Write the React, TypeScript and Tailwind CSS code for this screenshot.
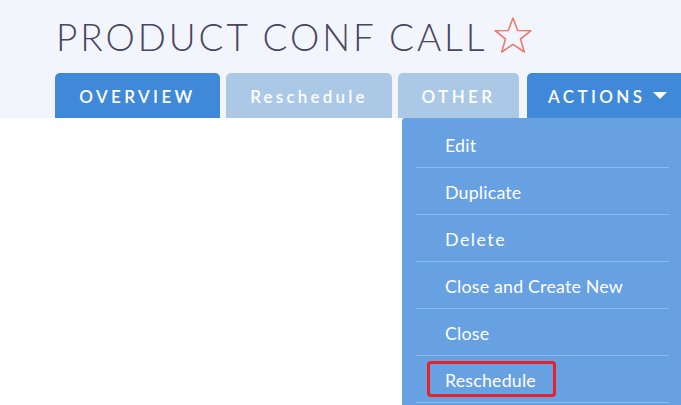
import React from "react";

const items = ["Edit", "Duplicate", "Delete", "Close and Create New", "Close", "Reschedule"];

export default function App() {
  return (
    <div className="relative w-[681px] h-[405px] overflow-hidden bg-white" style={{ fontFamily: "Lato, 'Open Sans', sans-serif" }}>
      <div className="h-[118px] bg-[#f2f6fc] pl-[55px] flex flex-col">
        <div className="flex items-center h-[73px] pl-[1px]">
          <h1 className="text-[37px] font-light tracking-[2.9px] text-[#4a4560] leading-none whitespace-nowrap">PRODUCT CONF CALL</h1>
          <svg width="40" height="38" viewBox="0 0 40 38" className="ml-[6px] -mt-[3px] shrink-0">
            <polygon points="20,2 24.7,14.5 38,14.7 27.5,23 31.3,36 20,28.3 8.7,36 12.5,23 2,14.7 15.3,14.5" fill="none" stroke="#ee7a70" strokeWidth="1.6" strokeLinejoin="round" />
          </svg>
        </div>
        <div className="flex items-end h-[45px]">
          <div className="shrink-0 w-[165px] h-[45px] rounded-t-[5px] bg-[#3f89d8] text-white flex items-center justify-center text-[17px] font-semibold tracking-[3.4px] pt-[2px]">OVERVIEW</div>
          <div className="shrink-0 ml-[6px] w-[166px] h-[45px] rounded-t-[5px] bg-[#abc9e6] text-white flex items-center justify-center text-[17px] font-semibold tracking-[3.2px] pt-[2px]">Reschedule</div>
          <div className="shrink-0 ml-[6px] w-[121px] h-[45px] rounded-t-[5px] bg-[#abc9e6] text-white flex items-center justify-center text-[17px] font-semibold tracking-[3.4px] pt-[2px]">OTHER</div>
          <div className="shrink-0 ml-[8px] w-[170px] h-[45px] rounded-t-[5px] bg-[#3f89d8] text-white flex items-center pl-[21px] text-[17px] font-semibold tracking-[3.4px] pt-[2px]">
            ACTIONS
            <svg width="14" height="8" viewBox="0 0 14 8" className="ml-[8px] mb-[2px]">
              <polygon points="0,0 14,0 7,7" fill="white" />
            </svg>
          </div>
        </div>
      </div>
      <div className="absolute left-[402px] top-[118px] w-[290px] h-[300px] bg-[#67a1e1] rounded-tl-[3px] pt-[3px]">
        {items.map((t, i) => (
          <div key={t} className="ml-[14px] w-[253px] border-b border-[#8ebbea]">
            <div className="h-[46px] flex items-center pl-[29px] pt-[1px]">
              {i === 5 ? (
                <span className="relative text-white text-[17.8px] leading-[24px] tracking-[0.2px]">
                  <span className="absolute left-[-18px] right-[-20px] top-[-7px] bottom-[-5px] border-[3px] border-[#e8202a] rounded-[4px]" />
                  {t}
                </span>
              ) : (
                <span className={`text-white text-[17.8px] leading-[24px] ${i === 2 ? "tracking-[1.5px]" : "tracking-[0.2px]"}`}>{t}</span>
              )}
            </div>
          </div>
        ))}
      </div>
    </div>
  );
}
